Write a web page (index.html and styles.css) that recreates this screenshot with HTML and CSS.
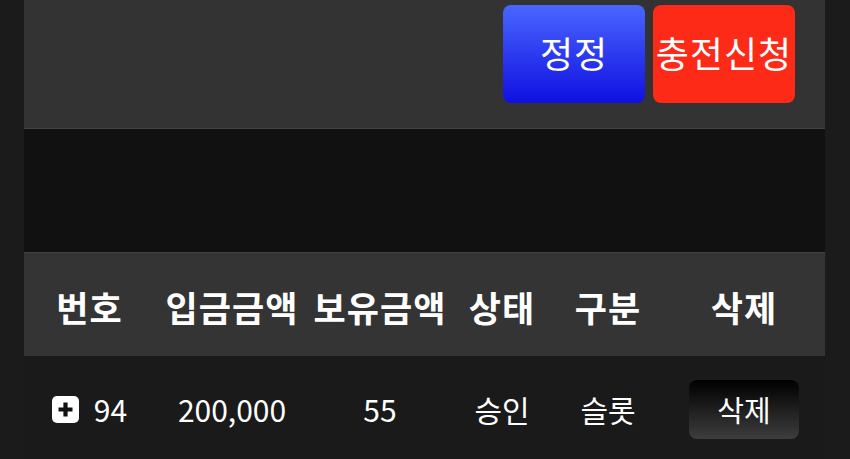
FILE: index.html
```html
<!DOCTYPE html>
<html>
<head>
    <title>충전신청</title>
    <link rel="stylesheet" href="styles.css">
</head>
<body>
    <div class="container">
        <div class="top-bar">
            <button class="button refresh">정정</button>
            <button class="button charge">충전신청</button>
        </div>

        <div class="spacer"></div>

        <div class="table">
            <div class="row head">
                <div>번호</div>
                <div>입금금액</div>
                <div>보유금액</div>
                <div>상태</div>
                <div>구분</div>
                <div>삭제</div>
            </div>
            <div class="row item">
                <div class="num">
                    <svg class="plus" width="27" height="27" viewBox="0 0 27 27">
                        <rect x="0" y="0" width="27" height="27" rx="5" fill="#fff"/>
                        <path d="M13.5 6.5v14M6.5 13.5h14" stroke="#111" stroke-width="4.2"/>
                    </svg>
                    <span>94</span>
                </div>
                <div>200,000</div>
                <div>55</div>
                <div>승인</div>
                <div>슬롯</div>
                <div><button class="del">삭제</button></div>
            </div>
        </div>
    </div>
</body>
</html>
```

FILE: styles.css
```css
body {
    margin: 0;
    background-color: #1b1b1b;
    font-family: "Noto Sans CJK KR", "Noto Sans", sans-serif;
    color: #fff;
}

.container {
    margin: 0 25px 0 24px;
    background-color: #111;
    min-height: 459px;
}

.top-bar {
    display: flex;
    justify-content: flex-end;
    align-items: flex-start;
    gap: 8px;
    height: 129px;
    padding: 5px 30px 0 0;
    box-sizing: border-box;
    background-color: #333;
    border-bottom: 1px solid #444;
}

.button {
    width: 142px;
    height: 98px;
    border: none;
    border-radius: 8px;
    color: #fff;
    font-family: inherit;
    font-size: 36px;
    letter-spacing: 1px;
    padding: 0 0 4px 0;
    white-space: nowrap;
    display: flex;
    justify-content: center;
    align-items: center;
    overflow: visible;
}

.refresh {
    background: linear-gradient(#4a66ff, #1010e0);
}

.charge {
    background-color: #fd2a17;
}

.spacer {
    height: 123px;
}

.table {
    border-top: 1px solid #444;
}

.row {
    display: grid;
    grid-template-columns: 131px 154px 142px 102px 110px 1fr;
    align-items: center;
    text-align: center;
}

.head {
    height: 103px;
    background-color: #343434;
    font-size: 35px;
    font-weight: bold;
    letter-spacing: 1px;
    padding-top: 4px;
    box-sizing: border-box;
}

.item {
    height: 106px;
    background-color: #1a1a1a;
    font-size: 30px;
}

.num {
    display: flex;
    justify-content: center;
    align-items: center;
    gap: 15px;
}

.plus {
    display: block;
}

.del {
    width: 110px;
    height: 59px;
    border: none;
    border-radius: 8px;
    background: linear-gradient(#000, #3d3d3d);
    color: #fff;
    font-family: inherit;
    font-size: 29px;
    padding: 0;
}
```
